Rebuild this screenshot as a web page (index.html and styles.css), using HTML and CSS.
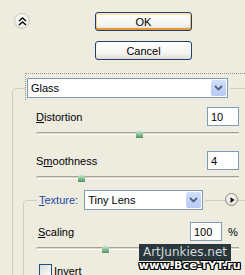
FILE: index.html
```html
<!DOCTYPE html>
<html lang="en">
<head>
  <meta charset="UTF-8" />
  <title>Glass</title>
  <link rel="stylesheet" href="styles.css">
</head>
<body>
  <div class="top">
    <button class="collapse" title="Collapse">
      <svg width="9" height="9" viewBox="0 0 9 9"><path d="M1 4 L4.5 1 L8 4 M1 8 L4.5 5 L8 8" fill="none" stroke="#111" stroke-width="1.6"/></svg>
    </button>
    <div class="actions">
      <button class="btn btn-default">OK</button>
      <button class="btn">Cancel</button>
    </div>
  </div>

  <fieldset class="group">
    <legend class="group-head">
      <div class="combo combo-focus combo-wide">
        <span class="combo-text">Glass</span>
        <span class="combo-arrow"><svg width="9" height="6" viewBox="0 0 9 6"><path d="M1 1 L4.5 4.5 L8 1" fill="none" stroke="#4d6185" stroke-width="1.8"/></svg></span>
      </div>
    </legend>

    <div class="param">
      <div class="row">
        <label class="lbl"><u>D</u>istortion</label>
        <input class="num" type="text" value="10">
      </div>
      <div class="slider"><div class="track"></div><span class="thumb" style="left:100px"></span></div>
    </div>

    <div class="param">
      <div class="row">
        <label class="lbl">S<u>m</u>oothness</label>
        <input class="num" type="text" value="4">
      </div>
      <div class="slider"><div class="track"></div><span class="thumb" style="left:42px"></span></div>
    </div>

    <fieldset class="group sub">
      <legend class="group-head sub-head">
        <label class="lbl lbl-blue"><u>T</u>exture:</label>
        <div class="combo combo-mid">
          <span class="combo-text">Tiny Lens</span>
          <span class="combo-arrow"><svg width="9" height="6" viewBox="0 0 9 6"><path d="M1 1 L4.5 4.5 L8 1" fill="none" stroke="#4d6185" stroke-width="1.8"/></svg></span>
        </div>
        <button class="play" title="Load texture">
          <svg width="5" height="6" viewBox="0 0 5 6"><path d="M0.5 0 L4.5 3 L0.5 6 Z" fill="#111"/></svg>
        </button>
      </legend>

      <div class="param param-sub">
        <div class="row">
          <label class="lbl"><u>S</u>caling</label>
          <input class="num" type="text" value="100">
          <span class="unit">%</span>
        </div>
        <div class="slider"><div class="track"></div><span class="thumb" style="left:66px"></span></div>
      </div>

      <div class="check">
        <span class="box"></span>
        <label class="lbl"><u>I</u>nvert</label>
      </div>
    </fieldset>
  </fieldset>

  <div class="mark">
    <span class="mark-site">ArtJunkies.net</span>
    <span class="mark-url">www.Bce-TYT.ru</span>
  </div>
</body>
</html>
```

FILE: styles.css
```css
body {
  margin: 0;
  width: 245px;
  height: 275px;
  overflow: hidden;
  position: relative;
  background: #eeebdf;
  font-family: "Liberation Sans", Arial, sans-serif;
  font-size: 11px;
  color: #000;
}

u {
  text-decoration: underline;
  text-underline-offset: 1px;
}

/* top bar */
.top {
  display: flex;
  align-items: flex-start;
  height: 78px;
  padding-top: 12px;
  box-sizing: border-box;
}

.collapse {
  width: 16px;
  height: 16px;
  margin: 1px 0 0 14px;
  padding: 0;
  border: 1px solid #cfcbbd;
  border-radius: 50%;
  background: radial-gradient(circle at 50% 35%, #ffffff 0%, #f4f3ee 55%, #dcd9cc 100%);
  display: flex;
  align-items: center;
  justify-content: center;
}

.actions {
  display: flex;
  flex-direction: column;
  gap: 10px;
  margin-left: 65px;
}

.btn {
  width: 97px;
  height: 19px;
  padding: 0;
  font-family: inherit;
  font-size: 11px;
  color: #000;
  border: 1px solid #1f3f6f;
  border-radius: 3px;
  background: linear-gradient(#ffffff, #f3f3ef 70%, #dedbd0);
}

.btn-default {
  box-shadow: inset 0 2px 0 #fde3ae, inset 0 -2px 0 #e79a33, inset 1px 0 0 #f9cf8a, inset -1px 0 0 #f1b862;
}

/* group boxes */
.group {
  margin: 0 0 0 12px;
  padding: 0;
  width: 250px;
  height: 220px;
  border: 1px solid #d2cfbf;
  border-radius: 4px;
}

.group-head {
  margin-left: 12px;
  padding: 0 2px;
  display: flex;
  align-items: center;
  position: relative;
}

.combo {
  height: 20px;
  box-sizing: border-box;
  border: 1px solid #7f9db9;
  background: #fff;
  display: flex;
  align-items: center;
  justify-content: space-between;
  position: relative;
}

.combo-wide {
  width: 201px;
}

.combo-mid {
  width: 119px;
  margin-left: 6px;
}

.combo-focus::before {
  content: "";
  position: absolute;
  left: -3px;
  top: -6px;
  right: -40px;
  bottom: -3px;
  border-left: 1px dotted #9a988c;
  border-top: 1px dotted #9a988c;
}

.combo-text {
  padding-left: 3px;
}

.combo-arrow {
  width: 15px;
  height: 16px;
  margin-right: 1px;
  border-radius: 2px;
  background: linear-gradient(#d2dffb, #b6c9f3);
  display: flex;
  align-items: center;
  justify-content: center;
}

.param {
  width: 203px;
  padding-left: 23px;
  margin-top: 9px;
}

.row {
  display: flex;
  align-items: center;
  height: 19px;
}

.lbl {
  flex: 1;
}

.lbl-blue {
  flex: none;
  color: #1a4aa5;
}

.num {
  width: 32px;
  height: 19px;
  box-sizing: border-box;
  padding: 0 0 0 3px;
  border: 1px solid #7f9db9;
  background: #fff;
  font-family: inherit;
  font-size: 11px;
  color: #000;
}

.unit {
  margin-left: 6px;
  width: 11px;
}

.slider {
  position: relative;
  height: 16px;
}

.track {
  position: absolute;
  left: 0;
  right: 0;
  top: 6px;
  height: 1px;
  border-top: 1px solid #a6a396;
  border-bottom: 1px solid #ffffff;
  border-left: 1px solid #c8c5b8;
  border-radius: 2px 0 0 2px;
  background: #dcd9cb;
}

.thumb {
  position: absolute;
  top: 3px;
  width: 7px;
  height: 9px;
  background: linear-gradient(#f4faf4, #a6d0ae 45%, #4e9462);
  clip-path: polygon(50% 0, 100% 35%, 100% 100%, 0 100%, 0 35%);
}

/* texture sub group */
.sub {
  width: 230px;
  margin: 4px 0 0 10px;
  height: 100px;
}

.sub-head {
  margin-left: 13px;
}

.play {
  position: absolute;
  left: calc(100% + 20px);
  top: 3px;
  width: 13px;
  height: 13px;
  padding: 0 0 0 1px;
  border: 1px solid #8d8b80;
  border-radius: 50%;
  background: radial-gradient(circle at 50% 35%, #ffffff, #e6e4da 70%, #c9c6b8);
  display: flex;
  align-items: center;
  justify-content: center;
}

.param-sub {
  width: 201px;
  padding-left: 14px;
  margin-top: 12px;
}

.param-sub .slider {
  margin-left: -2px;
}

.check {
  display: flex;
  align-items: center;
  gap: 2px;
  margin: 7px 0 0 15px;
}

.box {
  width: 13px;
  height: 13px;
  box-sizing: border-box;
  border: 1px solid #1c5180;
  background: linear-gradient(135deg, #dcdbd3, #ffffff);
}

/* watermark overlay */
.mark {
  position: absolute;
  right: 4px;
  bottom: 4px;
  display: flex;
  flex-direction: column;
  align-items: flex-end;
}

.mark-site {
  background: #2a383d;
  color: #d5dadb;
  font-family: "DejaVu Sans", sans-serif;
  font-size: 12px;
  padding: 1px 4px 2px;
  margin-right: 10px;
}

.mark-url {
  font-family: "DejaVu Sans", sans-serif;
  font-weight: bold;
  font-size: 11px;
  line-height: 10px;
  color: #fff;
  letter-spacing: 0.3px;
  text-shadow: 1px 0 #000, -1px 0 #000, 0 1px #000, 0 -1px #000, 1px 1px #000, -1px -1px #000, 1px -1px #000, -1px 1px #000;
}
```
